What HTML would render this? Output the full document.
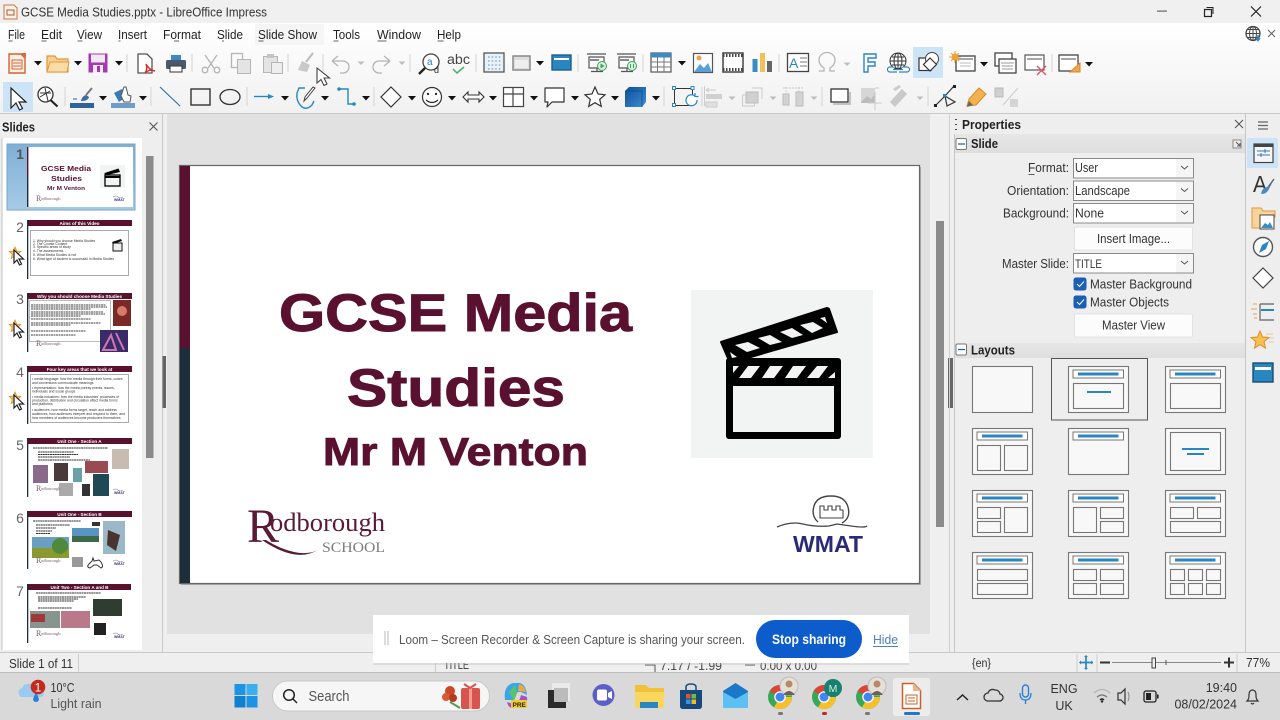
<!DOCTYPE html>
<html><head><meta charset="utf-8"><title>GCSE Media Studies.pptx - LibreOffice Impress</title>
<style>
html,body{margin:0;padding:0;width:1280px;height:720px;overflow:hidden;background:#eee}
svg{display:block;position:absolute;left:0;top:0;filter:blur(.3px)}
text{font-family:"Liberation Sans",sans-serif;fill:#222}
.m{font-size:13px;fill:#222}
.b{font-weight:bold}
.s{font-size:12.5px;fill:#333}
.tb{font-weight:bold;fill:#fff;font-size:4.6px;text-anchor:middle}
.tl{font-size:3.4px;fill:#333}
.n{font-size:14px;fill:#666;text-anchor:middle}
.g{fill:none;stroke:#b5b5b5;stroke-width:1.3}
.k{fill:none;stroke:#333;stroke-width:1.3}
.bl{fill:none;stroke:#2a86c0;stroke-width:1.4}
.sep{stroke:#d4d4d4;stroke-width:1}
</style></head><body>
<svg width="1280" height="720" viewBox="0 0 1280 720" xmlns="http://www.w3.org/2000/svg">
<defs>
<linearGradient id="tg" x1="0" y1="0" x2="0" y2="1"><stop offset="0" stop-color="#fff"/><stop offset="1" stop-color="#f1f1f1"/></linearGradient>
<linearGradient id="hg" x1="0" y1="0" x2="0" y2="1"><stop offset="0" stop-color="#e6e6e6"/><stop offset="1" stop-color="#dedede"/></linearGradient>
<linearGradient id="cube" x1="0" y1="0" x2="1" y2="1"><stop offset="0" stop-color="#0b4d9c"/><stop offset="1" stop-color="#3f8ed0"/></linearGradient>
<linearGradient id="sel" x1="0" y1="0" x2="0" y2="1"><stop offset="0" stop-color="#7fb0d6"/><stop offset="1" stop-color="#a6cbe6"/></linearGradient>
<path id="dd" d="M-4-2h8l-4 4.500z" fill="#111"/>
<path id="dg" d="M-3.500-1.500h7l-3.500 3.500z" fill="#bdbdbd"/>
<g id="sc"><path d="M13 0l1.800 4 4 .4-3 2.800.9 4.300-3.700-2.200-3.700 2.200.9-4.300-3-2.800 4-.4z" fill="#f3c56b" stroke="#e08e2b" stroke-width=".8" transform="translate(-6 0)"/><path d="M6 3v13l3-3 2.500 5 2-1-2.500-5h4.500z" fill="#fff" stroke="#222" stroke-width="1.200"/></g>
<g id="rod"><text x="0" y="0" style="font-family:'Liberation Serif',serif;font-size:8px;fill:#7a5a68">R</text><text x="5" y="-1" style="font-family:'Liberation Serif',serif;font-size:4.500px;fill:#7a5a68">odborough</text></g>
<g id="wm"><path d="M0 0q3-2 5 0t5 0" fill="none" stroke="#888" stroke-width=".6"/><text x="1" y="4" style="font-size:3.500px;font-weight:bold;fill:#3a3580">WMAT</text></g>
<g id="tile"><rect x=".5" y=".5" width="60" height="46" fill="#f8f8f8" stroke="#777" stroke-width="1.100"/></g>
<g id="tt"><rect x="5" y="4" width="50.500" height="8" fill="#fff" stroke="#777"/><rect x="10" y="6.500" width="40.500" height="3" fill="#2a86c0"/></g>
</defs>

<!-- base -->
<rect width="1280" height="720" fill="#eee"/>
<rect width="1280" height="23" fill="#f0f0f0"/>
<rect y="23" width="1280" height="90" fill="url(#tg)"/>
<rect y="113" width="1280" height="1" fill="#c9c9c9"/>

<!-- title bar -->
<path d="M4 5h10l3 3v11H4z" fill="#fdf3ea" stroke="#c9763a"/><rect x="7" y="10" width="7" height="5" fill="none" stroke="#a85c2a"/>
<text x="21" y="16.500" style="font-size:13px;fill:#333" textLength="246" lengthAdjust="spacingAndGlyphs">GCSE Media Studies.pptx - LibreOffice Impress</text>
<rect x="1157" y="10.500" width="10" height="1.200" fill="#666"/>
<path d="M1204.500 9.500h7v7h-7z" fill="none" stroke="#222" stroke-width="1.200"/><path d="M1206.500 7.500h6.500v6.500" fill="none" stroke="#222"/>
<path d="M1251 6.500l10 10M1261 6.500l-10 10" stroke="#222" stroke-width="1.200"/>

<!-- menu -->
<rect x="255" y="24" width="69" height="21" fill="#f5f5f5"/>
<g class="m">
<text class="m" x="8" y="39" textLength="17" lengthAdjust="spacingAndGlyphs">File</text>
<text class="m" x="41" y="39" textLength="21" lengthAdjust="spacingAndGlyphs">Edit</text>
<text class="m" x="77" y="39" textLength="25" lengthAdjust="spacingAndGlyphs">View</text>
<text class="m" x="118" y="39" textLength="29" lengthAdjust="spacingAndGlyphs">Insert</text>
<text class="m" x="163" y="39" textLength="38" lengthAdjust="spacingAndGlyphs">Format</text>
<text class="m" x="217" y="39" textLength="26" lengthAdjust="spacingAndGlyphs">Slide</text>
<text class="m" x="258" y="39" textLength="59" lengthAdjust="spacingAndGlyphs">Slide Show</text>
<text class="m" x="333" y="39" textLength="27" lengthAdjust="spacingAndGlyphs">Tools</text>
<text class="m" x="377" y="39" textLength="44" lengthAdjust="spacingAndGlyphs">Window</text>
<text class="m" x="437" y="39" textLength="24" lengthAdjust="spacingAndGlyphs">Help</text>
</g>
<path d="M8.500 41h4M41.500 41h5M77.500 41h5M118.500 41h2M174 41h5M222 41h2M258.500 41h5M333.500 41h5M377.500 41h9M437.500 41h6" stroke="#333" stroke-width=".8"/>

<!-- globe + close top right -->
<circle cx="1253" cy="33.500" r="7" fill="none" stroke="#444" stroke-width="1.300"/><path d="M1246 33.500h14M1253 26.500v14M1247.500 29.500h11M1247.500 37.500h11" stroke="#444"/><ellipse cx="1253" cy="33.500" rx="3.500" ry="7" fill="none" stroke="#444"/>
<path d="M1258 35v5m-2-2l2 2.500 2-2.500" stroke="#2a86c0" stroke-width="1.500" fill="none"/>
<path d="M1268 30l7 7M1275 30l-7 7" stroke="#666" stroke-width="1.100"/>

<!-- toolbar 1 -->
<path d="M9 54h12l4 4v15H9z" fill="#fdf1e6" stroke="#d5622e" stroke-width="1.400"/><path d="M21 53l5 0 0 5z" fill="#e2683a"/><rect x="12" y="60" width="10" height="9" fill="none" stroke="#d5622e"/><path d="M13 63h8M13 66h8" stroke="#d5622e"/>
<use href="#dd" x="38" y="63"/>
<path d="M47 56h8l2 3h11v13H47z" fill="#f7d08f" stroke="#e0973c" stroke-width="1.200"/><path d="M47 72l3-10h19l-2 10z" fill="#fbdca8" stroke="#e0973c"/>
<use href="#dd" x="78" y="63"/>
<rect x="88.500" y="53.500" width="19" height="19" fill="#a33ab0"/><rect x="91" y="54.500" width="14" height="8" fill="#f4e8f7"/><rect x="93" y="65" width="10" height="7.500" fill="#f4e8f7"/><rect x="97" y="66" width="3" height="6" fill="#a33ab0"/>
<use href="#dd" x="119" y="63"/>
<line class="sep" x1="127" y1="54" x2="127" y2="72"/>
<path d="M138 54h9l5 5v14h-14z" fill="#fff" stroke="#555" stroke-width="1.300"/><path d="M146 64q3 6 9 7-6-2-10 2 3-4 1-9z" fill="none" stroke="#d6322c" stroke-width="1.400"/>
<rect x="171" y="55" width="10" height="6" fill="#3b88c3"/><rect x="166" y="60" width="20" height="9" rx="1.500" fill="#4a5a68"/><rect x="170" y="66" width="12" height="6" fill="#fff" stroke="#333"/>
<line class="sep" x1="192" y1="54" x2="192" y2="72"/>
<path d="M205 55l9 13M217 55l-9 13" class="g"/><circle cx="205" cy="70" r="2.800" class="g"/><circle cx="217" cy="70" r="2.800" class="g"/>
<rect x="231.500" y="53.500" width="11" height="14" fill="#eee" class="g"/><rect x="237.500" y="59.500" width="13" height="14" fill="#e4e4e4" stroke="#b5b5b5"/>
<rect x="263.500" y="56.500" width="14" height="16" fill="#e4e4e4" stroke="#b5b5b5"/><rect x="267" y="54" width="7" height="4" fill="#c5c5c5"/><rect x="271.500" y="62.500" width="11" height="11" fill="#eee" stroke="#b5b5b5"/>
<line class="sep" x1="288" y1="54" x2="288" y2="72"/>
<path d="M313 53l-7 9" stroke="#bbb" stroke-width="2"/><path d="M298 70l4-9 8 4-3 7z" fill="#c9c9c9"/>
<line class="sep" x1="323" y1="54" x2="323" y2="72"/>
<path d="M332 61l6-5m-6 5l6 5m-6-5h11a6 6 0 0 1 0 12h-3" class="g"/><use href="#dg" x="361" y="63"/>
<path d="M390 61l-6-5m6 5l-6 5m6-5h-11a6 6 0 0 0 0 12h3" class="g"/><use href="#dg" x="402" y="63"/>
<line class="sep" x1="410" y1="54" x2="410" y2="72"/>
<circle cx="431" cy="62" r="8" fill="#fff" stroke="#444" stroke-width="1.300"/><path d="M425 68l-6 6" stroke="#222" stroke-width="2.400"/><text x="427" y="65" style="font-size:10px;fill:#2a86c0">a</text><text x="434" y="73" style="font-size:9px;fill:#222">d</text>
<text x="447" y="64" style="font-size:13.500px;fill:#444" textLength="23" lengthAdjust="spacingAndGlyphs">abc</text><path d="M453 69l4 4 7-6" stroke="#3fb46a" stroke-width="1.500" fill="none"/>
<line class="sep" x1="476" y1="54" x2="476" y2="72"/>
<rect x="484" y="53" width="20" height="19" fill="#e9f1f7" stroke="#555" stroke-width="1.300"/>
<path d="M488 57h14M488 61h14M488 65h14M488 69h14" stroke="#4f95c7" stroke-dasharray="1.600 2"/>
<rect x="513" y="56" width="17" height="14" fill="#ddd" stroke="#8a8a8a" stroke-width="1.500"/><rect x="515" y="60" width="13" height="8" fill="#eee"/>
<use href="#dd" x="540" y="63"/>
<rect x="552" y="55" width="19" height="15" fill="#2a86c0" stroke="#1f5f8a" stroke-width="1.400"/><rect x="554" y="58" width="15" height="2" fill="#fff"/>
<line class="sep" x1="578" y1="54" x2="578" y2="72"/>
<path d="M587 54h19M589 57h15v11h-15zM597 68v3M591 71.500h12" fill="none" stroke="#555" stroke-width="1.200"/><rect x="590" y="59" width="9" height="2" fill="#888"/><circle cx="602" cy="66" r="4.500" fill="#d8f0dd" stroke="#3fa25f"/><path d="M600.500 63.500l4 2.500-4 2.500z" fill="#3fa25f"/>
<path d="M617 54h19M619 57h15v11h-15zM627 68v3M621 71.500h12" fill="none" stroke="#555" stroke-width="1.200"/><rect x="620" y="59" width="9" height="2" fill="#888"/><circle cx="632" cy="66" r="4.500" fill="#d8f0dd" stroke="#3fa25f"/><path d="M630.500 64v4M633.500 64v4" stroke="#3fa25f"/>
<line class="sep" x1="643" y1="54" x2="643" y2="72"/>
<rect x="651" y="53" width="20" height="19" fill="#fff" stroke="#555" stroke-width="1.200"/><rect x="651" y="53" width="20" height="4.500" fill="#3a8cc5"/><path d="M657.500 57v15M664 57v15M651 62h20M651 67h20" stroke="#777"/>
<use href="#dd" x="682" y="63"/>
<rect x="693.500" y="53.500" width="19" height="19" fill="#fff" stroke="#555" stroke-width="1.200"/><circle cx="699" cy="58" r="2.500" fill="#f0a050"/><path d="M694 72l6-8 4 4 4-5 4 9z" fill="#5aa0d6"/>
<rect x="723" y="53" width="20" height="19" fill="#fff" stroke="#444" stroke-width="1.500"/><path d="M723 55.500h20M723 69.500h20" stroke="#444" stroke-width="3" stroke-dasharray="1.500 1.500"/>
<rect x="752.500" y="59" width="5" height="13" fill="#3a8cc5"/><rect x="760" y="53" width="5" height="19" fill="#f0c05a"/><rect x="767" y="61" width="5" height="11" fill="#666"/>
<line class="sep" x1="779" y1="54" x2="779" y2="72"/>
<rect x="787.500" y="53.500" width="21" height="18" fill="#fff" stroke="#444" stroke-width="1.300"/><text x="789" y="68" style="font-size:14px;fill:#2a86c0">A</text><path d="M800 58h7M800 62h7M800 66h7" stroke="#777"/>
<path d="M819 71h5v-3q-5-3-5-8a8 7.500 0 0 1 16 0q0 5-5 8v3h5" class="g"/><use href="#dg" x="847" y="64"/>
<path d="M864 54h12v4h-8v4h7v4h-7v6h-4z" fill="#fff" stroke="#2a86c0" stroke-width="1.400"/>
<circle cx="898" cy="61" r="8" fill="#fff" stroke="#333"/><path d="M890 61h16M898 53v16M892 57h12M892 65h12" stroke="#333"/><ellipse cx="898" cy="61" rx="4" ry="8" fill="none" stroke="#333"/><path d="M893 67h-3a2.500 2.500 0 0 0 0 5h7M903 67h4a2.500 2.500 0 0 1 0 5h-8M893 69.500h10" stroke="#2a86c0" stroke-width="1.200" fill="#fff"/>
<rect x="913" y="47" width="30" height="31" fill="#cde4f7"/>
<rect x="919" y="58" width="12" height="12.500" fill="#fff" stroke="#333" stroke-width="1.200"/><circle cx="932" cy="59" r="6.500" fill="#fff" stroke="#444"/><path d="M930 58l6.500 6.500-6.500 6.500-6.500-6.500z" fill="#fff" stroke="#333" stroke-width="1.200"/>
<rect x="956" y="56" width="19" height="15" fill="#fff" stroke="#444" stroke-width="1.300"/><path d="M958 59h15" stroke="#888" stroke-width="1.500"/><path d="M960 63h11M960 66h11" stroke="#bbb"/><circle cx="955" cy="57" r="3.500" fill="#f0a035"/><path d="M955 51v12M949 57h12M951 53l8 8M959 53l-8 8" stroke="#f0a035"/>
<use href="#dd" x="984" y="64"/>
<rect x="995" y="53" width="17" height="13" fill="#fff" stroke="#444" stroke-width="1.300"/><rect x="999" y="59" width="17" height="14" fill="#fff" stroke="#444" stroke-width="1.300"/><path d="M1001 63h13M1002 66h11M1002 69h11" stroke="#999"/>
<rect x="1025" y="55" width="19" height="15" fill="#fff" stroke="#555" stroke-width="1.200"/><path d="M1027 59h15" stroke="#888" stroke-width="1.500"/><path d="M1037 66l9 9M1046 66l-9 9" stroke="#e0525a" stroke-width="1.300"/>
<line class="sep" x1="1052" y1="54" x2="1052" y2="72"/>
<rect x="1059" y="55" width="19" height="16" fill="#fff" stroke="#444" stroke-width="1.300"/><path d="M1061 59h15" stroke="#888" stroke-width="1.500"/><path d="M1080 63v9h-10z" fill="#f0a850" stroke="#d98525"/>
<use href="#dd" x="1089" y="64"/>

<!-- toolbar 2 -->
<rect x="3" y="82" width="30" height="30" fill="#cde4f7"/>
<path d="M11 88v20l5-5 3.500 7 3-1.500-3.500-6.500h7z" fill="#fff" stroke="#222" stroke-width="1.200"/>
<circle cx="45.500" cy="94.500" r="7.500" fill="#fff" stroke="#333" stroke-width="1.300"/><path d="M40 93h11M45 88l3 13M40 97l10-6" stroke="#333"/><path d="M50.500 100l7 6.500" stroke="#222" stroke-width="2.200"/>
<line class="sep" x1="65" y1="87" x2="65" y2="106"/>
<rect x="70" y="103" width="24" height="5" fill="#2f6398"/><path d="M92 88l-6 7" stroke="#777" stroke-width="2"/><path d="M81 101q1-5 5-6l3 2q-1 4-8 4z" fill="#3a6ea0"/><path d="M73 99h4" stroke="#2f6398"/>
<use href="#dd" x="103" y="98"/>
<rect x="111" y="103" width="24" height="5" fill="#6f9cc8"/><path d="M114 93l8-4 4 8-7 5z" fill="#3a7ab8"/><path d="M124 87l2 0 2 8 3 1-1 6-6 0-3-6z" fill="#fff" stroke="#555"/>
<use href="#dd" x="143" y="98"/>
<line class="sep" x1="151" y1="87" x2="151" y2="106"/>
<path d="M160 87l20 19" stroke="#2a76ad" stroke-width="1.200"/>
<rect x="191" y="89" width="19" height="16" fill="none" stroke="#333" stroke-width="1.400"/>
<ellipse cx="230" cy="97" rx="10" ry="7.500" fill="none" stroke="#333" stroke-width="1.300"/>
<line class="sep" x1="247" y1="87" x2="247" y2="106"/>
<path d="M254 96.500h16" stroke="#2a86c0" stroke-width="1.400"/><path d="M268 94l6 2.500-6 2.500z" fill="#2a86c0"/>
<use href="#dd" x="285" y="98"/>
<path d="M305 88h-6l-2 5q-1 8 4 13t11-1l2-4" class="bl"/><path d="M315 88l-8 10-3 3 1-4 8-10z" fill="#fff" stroke="#444"/>
<use href="#dd" x="325" y="98"/>
<path d="M339 89h9v15h7" class="bl" stroke-width="1.200"/><circle cx="339" cy="89" r="1.800" fill="#2a86c0"/><circle cx="354" cy="104" r="1.800" fill="#2a86c0"/>
<use href="#dd" x="366" y="98"/>
<line class="sep" x1="374" y1="87" x2="374" y2="106"/>
<path d="M391 87l10 10-10 10-10-10z" fill="#fff" stroke="#333" stroke-width="1.200"/>
<use href="#dd" x="412" y="98"/>
<circle cx="432" cy="97" r="9.500" fill="#fff" stroke="#333" stroke-width="1.200"/><circle cx="428" cy="94" r="1.200" fill="#333"/><circle cx="436" cy="94" r="1.200" fill="#333"/><path d="M426 100q6 5 12 0" class="k" stroke-width="1"/>
<use href="#dd" x="452" y="98"/>
<path d="M463 97l5-5v3h11v-3l5 5-5 5v-3h-11v3z" fill="#fff" stroke="#333" stroke-width="1.100"/>
<use href="#dd" x="493" y="98"/>
<rect x="503.500" y="87.500" width="20" height="19" fill="#fff" stroke="#444" stroke-width="1.200"/><path d="M503.500 94h20M513 87.500v19" stroke="#444" stroke-width="1.200"/>
<use href="#dd" x="534" y="98"/>
<path d="M545 88h19v14h-12l-5 5 1-5h-3z" fill="#fff" stroke="#333" stroke-width="1.200" stroke-linejoin="round"/>
<use href="#dd" x="575" y="98"/>
<path d="M595 87l3 7 7 .8-5.300 4.600 1.600 7-6.300-3.700-6.300 3.700 1.600-7-5.300-4.600 7-.8z" fill="#fff" stroke="#333" stroke-width="1.200"/>
<use href="#dd" x="615" y="98"/>
<path d="M625 91l4-4h17v15l-4 5h-17z" fill="url(#cube)"/><path d="M625 91h17v16" fill="none" stroke="#0b3f80" stroke-width=".6"/>
<use href="#dd" x="656" y="98"/>
<line class="sep" x1="664" y1="87" x2="664" y2="106"/>
<rect x="674.500" y="88.500" width="18" height="17" fill="none" stroke="#333"/><g fill="#fff" stroke="#2a86c0"><rect x="672.500" y="86.500" width="3" height="3"/><rect x="691" y="86.500" width="3" height="3"/><rect x="672.500" y="103.500" width="3" height="3"/></g><path d="M697 100a5.500 5.500 0 1 1-2-4M695 93v3.500h3.500" fill="#fff" stroke="#2a86c0" stroke-width="1.200"/>
<line class="sep" x1="702" y1="87" x2="702" y2="106"/>
<path d="M704.500 86v20" stroke="#ccc"/><rect x="706" y="94" width="16" height="5" fill="#d0d0d0"/><rect x="706" y="102" width="11" height="5" fill="#e0e0e0" stroke="#ccc"/><path d="M706 90h10m-10 0l3-2m-3 2l3 2" stroke="#ccc" fill="none"/><use href="#dg" x="732" y="98"/>
<rect x="742.500" y="95" width="12" height="11" fill="none" stroke="#ccc"/><rect x="746" y="92" width="12" height="11" fill="#d0d0d0" stroke="#bbb"/><path d="M752 88h10v11" stroke="#ccc" fill="none"/><use href="#dg" x="773" y="98"/>
<rect x="783" y="94" width="6" height="11" fill="#d4d4d4" stroke="#bbb"/><rect x="796" y="92" width="7" height="14" fill="#d4d4d4" stroke="#bbb"/><path d="M786 87v18M799 87v20M783 88h20" stroke="#ccc" stroke-dasharray="2 1"/><use href="#dg" x="814" y="98"/>
<line class="sep" x1="822" y1="87" x2="822" y2="106"/>
<rect x="831" y="89" width="17" height="13" fill="#fff" stroke="#333" stroke-width="1.300"/><path d="M833 104h17v-12" stroke="#bbb" stroke-width="1.700" fill="none"/>
<rect x="861" y="88" width="14" height="15" fill="#d6d6d6"/><path d="M861 102l6-6 4 3 4-5v9h-14z" fill="#bbb"/><path d="M875 92v18M868 103h14M875 88h4" stroke="#c9c9c9" fill="none"/>
<path d="M890 102l12-13 5 5-12 13z" fill="#c9c9c9"/><path d="M894 90l6-4" stroke="#ccc" stroke-width="3"/><use href="#dg" x="920" y="98"/>
<line class="sep" x1="928" y1="87" x2="928" y2="106"/>
<path d="M935 106l10-10 9-10M945 96l2 10M945 96l10 6-8 4z" fill="none" stroke="#333" stroke-width="1.200"/><rect x="934" y="104" width="3" height="3" fill="#222"/><rect x="953" y="85" width="3" height="3" fill="#222"/><rect x="943" y="94" width="3" height="3" fill="#2a86c0"/>
<path d="M967 106l2-7 10-11 7 6-10 11z" fill="#f3b24f" stroke="#d58c26"/><path d="M967 107l2-6 4 4z" fill="#666"/>
<rect x="995" y="88" width="8" height="9" fill="#cfcfcf" stroke="#bbb"/><path d="M1003 105l15-17" stroke="#ccc"/><rect x="1010" y="99" width="8" height="8" fill="#d4d4d4"/>

<!-- work area -->
<rect x="160" y="114" width="795" height="538" fill="#efefef"/>
<rect x="167" y="114" width="763" height="520" fill="#e1e1e1"/>
<rect x="162" y="114" width="1" height="538" fill="#c9c9c9"/>
<rect x="162.500" y="356" width="3.500" height="52" fill="#666"/>
<rect x="948" y="358" width="5" height="50" fill="#666"/>
<rect x="936" y="221" width="8" height="306" fill="#8b8b8b"/>
<rect x="949" y="114" width="1" height="538" fill="#d0d0d0"/>

<!-- slide -->
<rect x="181" y="167" width="740" height="418" fill="#aaa"/>
<rect x="179.500" y="165.500" width="740" height="418" fill="#fff" stroke="#666" stroke-width="1.200"/>
<rect x="180" y="166" width="10" height="182" fill="#5a1130"/>
<rect x="180" y="348" width="10" height="235" fill="#1d2e3a"/>
<text x="279" y="331" style="font-size:53px;font-weight:bold;fill:#5a1130;stroke:#5a1130;stroke-width:1px" textLength="353" lengthAdjust="spacingAndGlyphs">GCSE Media</text>
<text x="347" y="406" style="font-size:53px;font-weight:bold;fill:#5a1130;stroke:#5a1130;stroke-width:1px" textLength="218" lengthAdjust="spacingAndGlyphs">Studies</text>
<text x="323" y="465" style="font-size:39px;font-weight:bold;fill:#5a1130;stroke:#5a1130;stroke-width:.9px" textLength="265" lengthAdjust="spacingAndGlyphs">Mr M Venton</text>
<!-- clapper -->
<rect x="691" y="290" width="182" height="168" fill="#f2f3f3"/>
<rect x="726" y="358" width="115" height="81" rx="3" fill="#000"/>
<rect x="733" y="386" width="101" height="46" fill="#f2f3f3"/>
<path d="M733 366h6l-6 7zM748 366h12l-9 12h-12zM770 366h13l-9 12h-12zM793 366h13l-9 12h-12zM817 366h11l-9 12h-12zM835 372v6h-7z" fill="#f2f3f3"/>
<path d="M721 342l106-34q1 0 2 1l8 23-107 31z" fill="#000" stroke="#000" stroke-width="2" stroke-linejoin="round"/>
<path d="M735 345l13-3 12 6-13 4zM758 338l12-3 12 7-12 3zM780 332l12-4 11 7-11 3zM800 325l13-3 10 6-11 5zM820 318l5-1 2 6zM730 352l7 5-5 1z" fill="#f2f3f3"/>
<!-- wmat -->
<path d="M777 527q14-6 26-3t26 2q8-2 8-2t14 2 16 0" fill="none" stroke="#444" stroke-width="1.300"/>
<path d="M818 522q-7-6-4-16t17-10 17 11-6 16" fill="none" stroke="#444" stroke-width="1.400"/>
<path d="M820 506h4v4h4v-4h4v4h4v-4h4v4h3v8h-23z" fill="none" stroke="#444" stroke-width="1.100"/>
<text x="793" y="552" style="font-size:23px;font-weight:bold;fill:#2b2a78" textLength="70" lengthAdjust="spacingAndGlyphs">WMAT</text>
<!-- rodborough -->
<text x="247" y="542" style="font-family:'Liberation Serif',serif;font-size:48px;fill:#5a1a34">R</text>
<text x="270" y="531" style="font-family:'Liberation Serif',serif;font-size:26px;fill:#5a1a34" textLength="115" lengthAdjust="spacingAndGlyphs">odborough</text>
<text x="322" y="552" style="font-family:'Liberation Serif',serif;font-size:15px;fill:#7c7c7c" textLength="63" lengthAdjust="spacingAndGlyphs">SCHOOL</text>
<path d="M266 540q14 9 28 12t24-2q-12 7-26 4t-30-14z" fill="#5a1a34"/>

<!-- slides panel -->
<rect x="0" y="114" width="160" height="24" fill="#eee"/>
<text x="2" y="131.500" style="font-size:13px;font-weight:bold;fill:#222" textLength="33" lengthAdjust="spacingAndGlyphs">Slides</text>
<path d="M149.500 122.500l8 8M157.500 122.500l-8 8" stroke="#555" stroke-width="1.100"/>
<rect x="2" y="138" width="140" height="512" fill="#fff"/>
<rect x="1.500" y="138" width="1" height="512" fill="#c4c4c4"/>

<!-- thumb 1 -->
<rect x="7" y="144" width="128" height="66" fill="url(#sel)" stroke="#7aa5c6"/>
<rect x="27" y="147" width="106" height="60" fill="#fff"/>
<rect x="27" y="147" width="1.400" height="30" fill="#5a1130"/><rect x="27" y="177" width="1.400" height="30" fill="#1d2e3a"/>
<text x="20" y="159" style="font-size:14px;font-weight:bold;fill:#555" text-anchor="middle">1</text>
<text x="41" y="171" style="font-size:7.500px;font-weight:bold;fill:#5a1130" textLength="50" lengthAdjust="spacingAndGlyphs">GCSE Media</text>
<text x="51" y="181" style="font-size:7.500px;font-weight:bold;fill:#5a1130" textLength="31" lengthAdjust="spacingAndGlyphs">Studies</text>
<text x="47" y="190" style="font-size:5.500px;font-weight:bold;fill:#5a1130" textLength="38" lengthAdjust="spacingAndGlyphs">Mr M Venton</text>
<rect x="100" y="165" width="25" height="23" fill="#f2f3f3"/><rect x="105" y="175" width="15" height="11" fill="#f2f3f3" stroke="#000" stroke-width="1.300"/><path d="M104.500 173l14-4.500 1.500 3.500-15 3.500z" fill="#000"/><path d="M105 177h15" stroke="#000" stroke-width="2"/>
<use href="#rod" x="36" y="201"/><use href="#wm" x="113" y="197"/>

<!-- thumb 2 -->
<text class="n" x="20" y="232">2</text>
<rect x="27" y="220" width="105" height="6" fill="#5a1130"/><rect x="27" y="220" width="1.300" height="59" fill="#1d2e3a"/>
<text class="tb" x="79.500" y="225">Aims of this Video</text>
<rect x="30.500" y="230.500" width="98" height="45" fill="#fff" stroke="#aaa"/>
<text class="tl" x="33" y="242">1. Why should you choose Media Studies</text>
<text class="tl" x="33" y="245">2. The Course Content</text>
<text class="tl" x="33" y="248">3. Specific areas of study</text>
<text class="tl" x="33" y="252">4. The assessments</text>
<text class="tl" x="33" y="256">5. What Media Studies is not</text>
<text class="tl" x="33" y="260">6. What type of student is successful in Media Studies</text>
<rect x="113" y="243" width="9" height="8" fill="#eee" stroke="#111"/><path d="M112 242l9-3 1 2-9 3z" fill="#111"/>
<use href="#sc" x="8" y="247"/>

<!-- thumb 3 -->
<text class="n" x="20" y="304">3</text>
<rect x="27" y="293" width="105" height="6" fill="#5a1130"/><rect x="27" y="293" width="1.300" height="59" fill="#1d2e3a"/>
<text class="tb" x="79.500" y="298">Why you should choose Media Studies</text>
<rect x="29.500" y="300.500" width="81" height="41" fill="#fff" stroke="#bbb"/>
<path d="M31 305h75M31 307h76M31 309h60M31 312h72M31 314h74M31 316h50M31 319h60M31 323h70M31 325h40M31 331h55M31 335h45" stroke="#444" stroke-width=".9" stroke-dasharray="2 .5"/>
<rect x="113" y="300" width="18" height="26" fill="#7a2a25"/><circle cx="122" cy="311" r="5" fill="#d77a6a"/>
<rect x="100" y="330" width="28" height="22" fill="#3a2a6a"/><path d="M103 350l8-15 5 15zM116 333l8 17" stroke="#c97ab0" stroke-width="2" fill="none"/>
<use href="#rod" x="36" y="346"/>
<use href="#sc" x="8" y="320"/>

<!-- thumb 4 -->
<text class="n" x="20" y="377">4</text>
<rect x="27" y="366" width="105" height="6" fill="#5a1130"/><rect x="27" y="366" width="1.300" height="58" fill="#1d2e3a"/>
<text class="tb" x="79.500" y="371">Four key areas that we look at</text>
<rect x="30.500" y="374.500" width="98" height="48" fill="#fff" stroke="#aaa"/>
<text class="tl" x="32" y="380">• media language: how the media through their forms, codes</text>
<text class="tl" x="32" y="384">and conventions communicate meanings</text>
<text class="tl" x="32" y="389">• representation: how the media portray events, issues,</text>
<text class="tl" x="32" y="392.500">individuals and social groups</text>
<text class="tl" x="32" y="398">• media industries: how the media industries' processes of</text>
<text class="tl" x="32" y="401.500">production, distribution and circulation affect media forms</text>
<text class="tl" x="32" y="405">and platforms</text>
<text class="tl" x="32" y="411">• audiences: how media forms target, reach and address</text>
<text class="tl" x="32" y="415">audiences, how audiences interpret and respond to them, and</text>
<text class="tl" x="32" y="419">how members of audiences become producers themselves</text>
<use href="#sc" x="8" y="392"/>

<!-- thumb 5 -->
<text class="n" x="20" y="450">5</text>
<rect x="27" y="438" width="105" height="6" fill="#5a1130"/><rect x="27" y="438" width="1.300" height="59" fill="#1d2e3a"/>
<text class="tb" x="79.500" y="443">Unit One - Section A</text>
<path d="M33 448h75M38 452h36M38 454.500h40M38 457h32M38 460h52" stroke="#333" stroke-width=".9" stroke-dasharray="2 .4"/>
<rect x="33" y="465" width="15" height="18" fill="#8a6a8a"/><rect x="54" y="463" width="14" height="18" fill="#4a3a3a"/><rect x="73" y="468" width="9" height="14" fill="#6aa0a8"/><rect x="85" y="461" width="23" height="12" fill="#9a4a52"/><rect x="112" y="449" width="17" height="20" fill="#c8bcb0"/><rect x="93" y="474" width="16" height="22" fill="#1f4a55"/><rect x="59" y="483" width="14" height="13" fill="#aaa"/><rect x="82" y="484" width="8" height="12" fill="#333"/>
<use href="#rod" x="36" y="491"/><use href="#wm" x="113" y="490"/>

<!-- thumb 6 -->
<text class="n" x="20" y="523">6</text>
<rect x="27" y="511" width="105" height="6" fill="#5a1130"/><rect x="27" y="511" width="1.300" height="58" fill="#1d2e3a"/>
<text class="tb" x="79.500" y="516">Unit One - Section B</text>
<path d="M33 521h48M36 525h34M36 528h20M36 531h16M36 533.500h14" stroke="#333" stroke-width=".9" stroke-dasharray="2 .4"/>
<rect x="32" y="537" width="37" height="11" fill="#6a9fc0"/><rect x="32" y="548" width="37" height="10" fill="#8a9a30"/><circle cx="60" cy="546" r="8" fill="#4e8a3a"/>
<rect x="72" y="528" width="27" height="14" fill="#5a94c0"/><rect x="72" y="536" width="27" height="6" fill="#3f6a4a"/>
<rect x="103" y="521" width="22" height="33" fill="#9ab8c8"/><path d="M108 530l12 5-4 16-9-6z" fill="#4a3430"/>
<rect x="72" y="557" width="11" height="10" fill="#999"/><rect x="92" y="522" width="8" height="4" fill="#333"/>
<path d="M89 564q-3 3 1 4l4-3h3l4 3q3-1 0-6l-2-2-5 1-1-3-1 3z" fill="none" stroke="#333"/>
<use href="#rod" x="36" y="563"/><use href="#wm" x="113" y="561"/>

<!-- thumb 7 -->
<text class="n" x="20" y="596">7</text>
<rect x="27" y="584" width="104" height="6" fill="#5a1130"/><rect x="27" y="584" width="1.300" height="59" fill="#1d2e3a"/>
<text class="tb" x="79.500" y="589">Unit Two - Section A and B</text>
<path d="M36 593h65M38 597h48M38 599h40M38 601h36M38 608h34" stroke="#333" stroke-width=".9" stroke-dasharray="2 .4"/>
<rect x="30" y="611" width="30" height="17" fill="#88948e"/><rect x="31" y="614" width="14" height="8" fill="#a03838"/><rect x="61" y="611" width="29" height="17" fill="#b87a8a"/><rect x="93" y="599" width="29" height="17" fill="#2e3d30"/><path d="M94 623h12v12H94z" fill="#222"/>
<use href="#rod" x="36" y="636"/><use href="#wm" x="113" y="634"/>
<rect x="142" y="138" width="18" height="512" fill="#eee"/><rect x="146" y="156" width="7.500" height="302" fill="#8b8b8b"/>

<!-- properties panel -->
<rect x="954" y="114" width="326" height="538" fill="#eee"/>
<rect x="954" y="134" width="1" height="518" fill="#c6c6c6"/>
<rect x="1245" y="114" width="1" height="538" fill="#c6c6c6"/>
<path d="M956 119v1M956 124v1M956 129v1" stroke="#333" stroke-width="1.800"/>
<text x="962" y="129" style="font-size:12.500px;font-weight:bold;fill:#222" textLength="59" lengthAdjust="spacingAndGlyphs">Properties</text>
<path d="M1235 120l8 8M1243 120l-8 8" stroke="#555" stroke-width="1.100"/>
<path d="M1258 122h10M1258 125.500h10M1258 129h10" stroke="#666" stroke-width="1.200"/>
<rect x="955" y="134" width="290" height="19" fill="url(#hg)"/>
<rect x="956" y="138.500" width="10.500" height="11" rx="1.500" fill="#fff" stroke="#777"/><path d="M958 144h7" stroke="#1f5f8a" stroke-width="1.200"/>
<text x="971" y="148" style="font-size:12.500px;font-weight:bold" textLength="27" lengthAdjust="spacingAndGlyphs">Slide</text>
<rect x="1233" y="140" width="8" height="8" fill="#eee" stroke="#888"/><path d="M1236 142l4 4m0-3v3h-3" stroke="#555" fill="none"/>

<text class="s" x="1028" y="172" textLength="41" lengthAdjust="spacingAndGlyphs">Format:</text>
<path d="M1028.500 174.500h6" stroke="#333" stroke-width=".8"/>
<text class="s" x="1007" y="195" textLength="62" lengthAdjust="spacingAndGlyphs">Orientation:</text>
<text class="s" x="1003" y="217.500" textLength="66" lengthAdjust="spacingAndGlyphs">Background:</text>
<text class="s" x="1002" y="268" textLength="67" lengthAdjust="spacingAndGlyphs">Master Slide:</text>

<g fill="#fff" stroke="#8a8a8a">
<rect x="1073.500" y="158.500" width="120" height="19.500"/>
<rect x="1073.500" y="181" width="120" height="19.500"/>
<rect x="1073.500" y="203.500" width="120" height="19.500"/>
<rect x="1073.500" y="253.500" width="120" height="19.500"/>
</g>
<g fill="#f5f5f5"><rect x="1176" y="159" width="17" height="18.500"/><rect x="1176" y="181.500" width="17" height="18.500"/><rect x="1176" y="204" width="17" height="18.500"/><rect x="1176" y="254" width="17" height="18.500"/></g>
<path d="M1181 166l3.500 3 3.500-3M1181 188.500l3.500 3 3.500-3M1181 211l3.500 3 3.500-3M1181 261l3.500 3 3.500-3" fill="none" stroke="#555"/>
<text class="s" x="1075" y="172" textLength="23" lengthAdjust="spacingAndGlyphs">User</text>
<text class="s" x="1075" y="195" textLength="55" lengthAdjust="spacingAndGlyphs">Landscape</text>
<text class="s" x="1075" y="217.500" textLength="29" lengthAdjust="spacingAndGlyphs">None</text>
<text x="1075" y="268" style="font-size:11.500px;fill:#333" textLength="27" lengthAdjust="spacingAndGlyphs">TITLE</text>
<rect x="1074.500" y="227" width="118" height="23" rx="1.500" fill="#fcfcfc" stroke="#e2e2e2"/>
<text class="s" x="1097" y="243" textLength="73" lengthAdjust="spacingAndGlyphs">Insert Image...</text>
<rect x="1073.500" y="277.500" width="13" height="13" rx="2.500" fill="#1a5fb4"/><path d="M1077 284l2.500 2.500 4.500-5" fill="none" stroke="#fff"/>
<text class="s" x="1090" y="288.500" textLength="102" lengthAdjust="spacingAndGlyphs">Master Background</text>
<rect x="1073.500" y="295.500" width="13" height="13" rx="2.500" fill="#1a5fb4"/><path d="M1077 302l2.500 2.500 4.500-5" fill="none" stroke="#fff"/>
<text class="s" x="1090" y="306.500" textLength="79" lengthAdjust="spacingAndGlyphs">Master Objects</text>
<rect x="1074.500" y="314" width="118" height="23" rx="1.500" fill="#fcfcfc" stroke="#e2e2e2"/>
<text class="s" x="1102" y="329.500" textLength="63" lengthAdjust="spacingAndGlyphs">Master View</text>

<rect x="955" y="343" width="290" height="15" fill="url(#hg)"/>
<rect x="956" y="344" width="10.500" height="11" rx="1.500" fill="#fff" stroke="#777"/><path d="M958 349.500h7" stroke="#1f5f8a" stroke-width="1.200"/>
<text x="971" y="354.500" style="font-size:12.500px;font-weight:bold" textLength="44" lengthAdjust="spacingAndGlyphs">Layouts</text>

<!-- layout tiles -->
<rect x="1051.500" y="358.500" width="96" height="61.500" fill="none" stroke="#555"/>
<use href="#tile" x="972" y="366"/>
<use href="#tile" x="1068" y="366"/>
<use href="#tile" x="1165" y="366"/>
<use href="#tile" x="972" y="428"/>
<use href="#tile" x="1068" y="428"/>
<use href="#tile" x="1165" y="428"/>
<use href="#tile" x="972" y="490"/>
<use href="#tile" x="1068" y="490"/>
<use href="#tile" x="1165" y="490"/>
<use href="#tile" x="972" y="552"/>
<use href="#tile" x="1068" y="552"/>
<use href="#tile" x="1165" y="552"/>
<use href="#tt" x="1068" y="366"/><use href="#tt" x="1165" y="366"/>
<use href="#tt" x="972" y="428"/><use href="#tt" x="1068" y="428"/>
<use href="#tt" x="972" y="490"/><use href="#tt" x="1068" y="490"/><use href="#tt" x="1165" y="490"/>
<use href="#tt" x="972" y="552"/><use href="#tt" x="1068" y="552"/><use href="#tt" x="1165" y="552"/>
<g fill="#f8f8f8" stroke="#777" stroke-width="1.100">
<rect x="1073.500" y="383.500" width="50" height="25"/>
<rect x="1170.500" y="383.500" width="50" height="25"/>
<rect x="977.500" y="445.500" width="23" height="25"/><rect x="1004.500" y="445.500" width="23" height="25"/>
<rect x="1170.500" y="432.500" width="50" height="38"/>
<rect x="977.500" y="507.500" width="23" height="11"/><rect x="977.500" y="521.500" width="23" height="11"/><rect x="1004.500" y="507.500" width="23" height="25"/>
<rect x="1073.500" y="507.500" width="23" height="25"/><rect x="1100.500" y="507.500" width="23" height="11"/><rect x="1100.500" y="521.500" width="23" height="11"/>
<rect x="1170.500" y="507.500" width="23" height="11"/><rect x="1197.500" y="507.500" width="23" height="11"/><rect x="1170.500" y="521.500" width="50" height="11"/>
<rect x="977.500" y="569.500" width="50" height="11"/><rect x="977.500" y="583.500" width="50" height="11"/>
<rect x="1073.500" y="569.500" width="23" height="11"/><rect x="1100.500" y="569.500" width="23" height="11"/><rect x="1073.500" y="583.500" width="23" height="11"/><rect x="1100.500" y="583.500" width="23" height="11"/>
<rect x="1170.500" y="569.500" width="14" height="11"/><rect x="1188.500" y="569.500" width="14" height="11"/><rect x="1206.500" y="569.500" width="14" height="11"/><rect x="1170.500" y="583.500" width="14" height="11"/><rect x="1188.500" y="583.500" width="14" height="11"/><rect x="1206.500" y="583.500" width="14" height="11"/>
</g>
<rect x="1087" y="391" width="24" height="2" fill="#2a86c0"/>
<rect x="1182" y="448" width="27" height="2" fill="#2a86c0"/><rect x="1187" y="453" width="17" height="2" fill="#2a86c0"/>

<!-- deck -->
<rect x="1247" y="138" width="31" height="30" fill="#cde4f7" rx="1"/>
<rect x="1254" y="144" width="19" height="18.500" fill="#f5f5f5" stroke="#444" stroke-width="1.200"/><rect x="1254" y="144" width="19" height="3" fill="#444"/><path d="M1257 151h13M1257 155h13" stroke="#3a7ab0"/><path d="M1265 149v4M1261 153v4" stroke="#3a7ab0"/>
<text x="1253" y="192" style="font-size:23px;fill:#333" textLength="14" lengthAdjust="spacingAndGlyphs">A</text><path d="M1274 179l-7 8q-5 1-6 7 6 0 8-5z" fill="#4a8ac0"/><path d="M1274 179l-5 7" stroke="#666" stroke-width="1.500"/>
<path d="M1252 208h9l2 3h12v6h-15v11h-8z" fill="#f9d49a" stroke="#e0973c"/><rect x="1260" y="215" width="14" height="14" fill="#fff" stroke="#444"/><path d="M1261 228l4-5 3 2 2-3 3 6z" fill="#3a8cc5"/>
<circle cx="1263" cy="247" r="9.500" fill="#fff" stroke="#555" stroke-width="1.400"/><path d="M1269 241l-3 8-7 4 3-8z" fill="#2a86c0"/>
<path d="M1263 268l10 10-10 10-10-10z" fill="#fff" stroke="#444" stroke-width="1.200"/>
<path d="M1260 304h14M1260 304v16h14" fill="none" stroke="#777" stroke-width="1.400"/><path d="M1261 310h13" stroke="#2a86c0" stroke-width="2"/><path d="M1253 304h4M1251 309h6M1253 314h4M1254 318h3" stroke="#f0b070" stroke-width="1.300"/>
<path d="M1260 331l2.500 6 6.500.5-5 4.300 1.500 6.300-5.500-3.400-5.500 3.400 1.500-6.300-5-4.300 6.500-.5z" fill="#f6c24f" stroke="#e08e2b"/><path d="M1266 334h7M1269 338h5M1268 342h6" stroke="#e6c89a"/>
<rect x="1253" y="363" width="20" height="19" fill="#2a86c0" stroke="#1b4d70" stroke-width="1.400"/><rect x="1255" y="367" width="16" height="3" fill="#fff"/>

<!-- status bar -->
<rect x="0" y="652" width="1280" height="1" fill="#c8c8c8"/>
<rect x="0" y="653" width="1280" height="19" fill="#efefef"/>
<text x="9" y="668" style="font-size:13px;fill:#333" textLength="64" lengthAdjust="spacingAndGlyphs">Slide 1 of 11</text>
<path d="M78.500 654v18M435.500 654v18M1077 654v18M1097 654v18M1237 654v18" stroke="#ccc"/>
<text x="444" y="669" style="font-size:12px;fill:#333" textLength="25" lengthAdjust="spacingAndGlyphs">TITLE</text>
<path d="M645 665h10v7M745 665h10" stroke="#555" fill="none"/>
<text x="660" y="670" style="font-size:12px;fill:#444" textLength="62" lengthAdjust="spacingAndGlyphs">7.17 / -1.99</text>
<text x="760" y="670" style="font-size:12px;fill:#444" textLength="57" lengthAdjust="spacingAndGlyphs">0.00 x 0.00</text>
<text x="972" y="667" style="font-size:11.500px;fill:#333" textLength="19" lengthAdjust="spacingAndGlyphs">{en}</text>
<path d="M1086 656v13M1080 662.500h13" stroke="#2a86c0" stroke-width="1.700"/><path d="M1086 655l-2 2h4zM1086 670l-2-2h4zM1079 662.500l2-2v4zM1093 662.500l-2-2v4z" fill="#2a86c0"/>
<path d="M1100 662.500h10" stroke="#333" stroke-width="2"/>
<path d="M1112 662.500h109" stroke="#888"/><rect x="1152" y="658" width="3.500" height="10" fill="#eee" stroke="#444"/><path d="M1166 660v5" stroke="#555"/>
<path d="M1224 662.500h10M1229 657.500v10" stroke="#333" stroke-width="2"/>
<text x="1246" y="667" style="font-size:12.500px;fill:#333" textLength="24" lengthAdjust="spacingAndGlyphs">77%</text>

<!-- taskbar -->
<rect x="0" y="672" width="1280" height="48" fill="#d9d9d9"/>
<rect x="0" y="672" width="1280" height="1" fill="#bdbdbd"/>
<!-- weather -->
<path d="M21 697a5 5 0 0 1 1-9q2-5 8-4a7 7 0 0 1 10 5 4 4 0 0 1 0 8z" fill="#9cc9ee"/><path d="M36 692l-3 7a3 3 0 0 0 6 0z" fill="#2a7fdb"/>
<circle cx="38" cy="687" r="7.300" fill="#c22b1d"/><text x="38" y="691.500" text-anchor="middle" style="font-size:12px;fill:#fff">1</text>
<text x="50.500" y="692" style="font-size:12.500px;fill:#333" textLength="24" lengthAdjust="spacingAndGlyphs">10°C</text>
<text x="50.500" y="708" style="font-size:12.500px;fill:#555" textLength="51" lengthAdjust="spacingAndGlyphs">Light rain</text>
<!-- win -->
<g fill="#1c93e3"><rect x="234.500" y="684" width="11" height="11"/><rect x="246.500" y="684" width="11" height="11" fill="#3cb0ee"/><rect x="234.500" y="696" width="11" height="11.500" fill="#0f7fcf"/><rect x="246.500" y="696" width="11" height="11.500"/></g>
<!-- search -->
<rect x="272.500" y="681" width="217" height="30" rx="15" fill="#f6f6f6" stroke="#c8c8c8"/>
<circle cx="289" cy="695" r="5.300" fill="none" stroke="#222" stroke-width="1.500"/><path d="M293 699l4 4" stroke="#222" stroke-width="1.500"/>
<text x="308.500" y="701" style="font-size:14.500px;fill:#555" textLength="41" lengthAdjust="spacingAndGlyphs">Search</text>
<circle cx="450" cy="691" r="5" fill="#c8482a"/><circle cx="446" cy="697" r="4" fill="#d65a35"/><circle cx="453" cy="698" r="4" fill="#b53a22"/><path d="M450 702l10 6" stroke="#5a9a4a" stroke-width="2"/>
<rect x="461" y="688" width="19" height="21" rx="2" fill="#d9534f"/><rect x="469" y="688" width="3" height="21" fill="#f0a090"/><path d="M464 684l6 4 6-4" fill="none" stroke="#d9534f" stroke-width="2"/>
<!-- copilot -->
<path d="M505 700q-2-14 8-17h7q6 2 7 12l-6-3q-6-1-8 8z" fill="#3aa5e8"/><path d="M527 697q1 8-5 11h-10q-4-1-5-6l6 2q6 0 8-9z" fill="#a24fd0"/><path d="M509 692l6-7 2 8-3 8z" fill="#5ac46a"/><path d="M519 684q5 1 7 8l-8-1z" fill="#f0a83a"/>
<rect x="511" y="700" width="16" height="8" rx="1" fill="#f5cb2a"/><text x="512.500" y="707" style="font-size:6.500px;font-weight:bold;fill:#222">PRE</text>
<!-- task view -->
<rect x="552" y="683" width="18" height="18" fill="#eee" opacity=".8"/><rect x="548" y="690" width="18" height="18" fill="#2b2b2b"/><rect x="554" y="688" width="14" height="14" fill="#bbb"/>
<!-- meet -->
<circle cx="603.500" cy="695" r="11" fill="#5b5fc7"/><rect x="597" y="689.500" width="10" height="11" rx="2" fill="#fff"/><path d="M608 693l4-2v8l-4-2z" fill="#fff"/>
<!-- explorer -->
<path d="M635 685h11l3 3h15v20h-29z" fill="#f0c23c"/><path d="M635 692h29v16h-29z" fill="#f9d75e"/><rect x="640" y="702" width="18" height="6" fill="#2a86c0"/>
<!-- store -->
<path d="M680 690h22v16q0 3-3 3h-16q-3 0-3-3z" fill="#174a7a"/><path d="M686 690v-3q0-3 5-3t5 3v3" fill="none" stroke="#174a7a" stroke-width="1.500"/><rect x="686" y="694" width="4.500" height="4.500" fill="#e2503a"/><rect x="691.500" y="694" width="4.500" height="4.500" fill="#6abf4b"/><rect x="686" y="699.500" width="4.500" height="4.500" fill="#2a9ae3"/><rect x="691.500" y="699.500" width="4.500" height="4.500" fill="#f3b82c"/>
<!-- mail -->
<path d="M723 691l12.500-8 12.500 8v15q0 2-2 2h-21q-2 0-2-2z" fill="#1b78c8"/><path d="M723 692l12.500 7 12.500-7v15q0 1-2 1h-21q-2 0-2-1z" fill="#5cc0f2"/>
<!-- chrome x3 -->
<g id="chr"><circle cx="780" cy="697" r="12" fill="#3aa757"/><path d="M780 697l-10.400-6a12 12 0 0 1 20.800 0z" fill="#dc4437"/><path d="M780 697h12a12 12 0 0 1-18 10.400z" fill="#f6c02c"/><circle cx="780" cy="697" r="5.800" fill="#fff"/><circle cx="780" cy="697" r="4.500" fill="#4285f4"/></g>
<use href="#chr" x="44"/><use href="#chr" x="88"/>
<circle cx="789" cy="686" r="9" fill="#e6dfd6" stroke="#bbb"/><circle cx="789" cy="684" r="3.500" fill="#b9876a"/><path d="M783 695q6-8 12 0z" fill="#6a6258"/>
<circle cx="833" cy="688" r="9" fill="#17806e"/><text x="833" y="692" text-anchor="middle" style="font-size:10.500px;fill:#cfeee6">M</text>
<circle cx="877" cy="686" r="9" fill="#e6dfd6" stroke="#bbb"/><circle cx="877" cy="684" r="3.500" fill="#b9876a"/><path d="M871 695q6-8 12 0z" fill="#6a6258"/>
<rect x="778" y="712" width="5" height="3" rx="1.500" fill="#777"/><rect x="822" y="712" width="5" height="3" rx="1.500" fill="#c22b1d"/><rect x="865" y="712" width="5" height="3" rx="1.500" fill="#777"/>
<!-- impress active -->
<rect x="893" y="678" width="37" height="38" rx="3" fill="#ececec"/>
<path d="M902.500 683.500h11l7 7v18h-18z" fill="#fff" stroke="#c8622a" stroke-width="1.500"/><path d="M913 683v8h8z" fill="#f0b38a"/><rect x="906" y="695" width="11" height="9" fill="#fff" stroke="#c8622a"/><path d="M908 698h7M908 701h7" stroke="#c8622a"/>
<rect x="904" y="712" width="16" height="3" rx="1.500" fill="#1a78d0"/>
<!-- tray -->
<path d="M957 700l5.500-5 5.500 5" fill="none" stroke="#222" stroke-width="1.400"/>
<path d="M988 701a4 4 0 0 1 0-8q2-5 7-3a4.500 4.500 0 0 1 5 4 3.500 3.500 0 0 1-1 7z" fill="none" stroke="#333" stroke-width="1.300"/>
<rect x="1022.500" y="685" width="6" height="12" rx="3" fill="none" stroke="#2a7fdb" stroke-width="1.400"/><path d="M1020 693q0 7 5.500 7t5.500-7M1025.500 700v4" fill="none" stroke="#2a7fdb" stroke-width="1.300"/>
<text x="1064" y="693" text-anchor="middle" style="font-size:12.500px;fill:#333">ENG</text>
<text x="1064" y="710" text-anchor="middle" style="font-size:12.500px;fill:#333">UK</text>
<path d="M1094 693q8-7 16 0" fill="none" stroke="#b5b5b5" stroke-width="1.300"/><path d="M1097 697q5-4 10 0" fill="none" stroke="#777" stroke-width="1.300"/><path d="M1100 700q2-2 4 0" fill="none" stroke="#222" stroke-width="1.300"/><circle cx="1102" cy="701.500" r="1.200" fill="#222"/>
<path d="M1118 693h3l4-4v15l-4-4h-3z" fill="none" stroke="#333" stroke-width="1.200"/><path d="M1128 692q2 4.500 0 9" fill="none" stroke="#888"/>
<rect x="1144" y="691" width="12" height="11" rx="2" fill="none" stroke="#222" stroke-width="1.300"/><rect x="1146" y="693" width="5" height="7" fill="#222"/><rect x="1157" y="694.500" width="1.600" height="4" fill="#222"/>
<text x="1237" y="692" text-anchor="end" style="font-size:12.500px;fill:#333">19:40</text>
<text x="1237" y="708.500" text-anchor="end" style="font-size:12.500px;fill:#333">08/02/2024</text>
<path d="M1247 701h11q-2-2-2-5v-2a3.500 4 0 0 0-7 0v2q0 3-2 5zM1251 703q1.500 2 3 0" fill="none" stroke="#333" stroke-width="1.200"/>

<!-- loom popup -->
<rect x="373" y="616" width="536" height="49" fill="#bbb" opacity=".35"/>
<rect x="373" y="615" width="536" height="48" fill="#fff"/>
<path d="M385 631v14M388 631v14" stroke="#c8c8c8" stroke-width="1.300"/>
<text x="399" y="644" style="font-size:13px;fill:#555" textLength="346" lengthAdjust="spacingAndGlyphs">Loom – Screen Recorder &amp; Screen Capture is sharing your screen.</text>
<rect x="756" y="620" width="106" height="38" rx="19" fill="#0d5ccb"/>
<text x="772" y="644" style="font-size:13.500px;font-weight:bold;fill:#fff" textLength="74" lengthAdjust="spacingAndGlyphs">Stop sharing</text>
<text x="873" y="644" style="font-size:13px;fill:#4a7fc1" textLength="25" lengthAdjust="spacingAndGlyphs">Hide</text>
<path d="M873 646.500h25" stroke="#4a7fc1" stroke-width=".9"/>

<!-- mouse cursor -->
<path d="M317 68v15l4-3.500 3 6 3-1.500-3-6h5.500z" fill="#fff" stroke="#444" stroke-width="1.100"/>
</svg>
</body></html>
